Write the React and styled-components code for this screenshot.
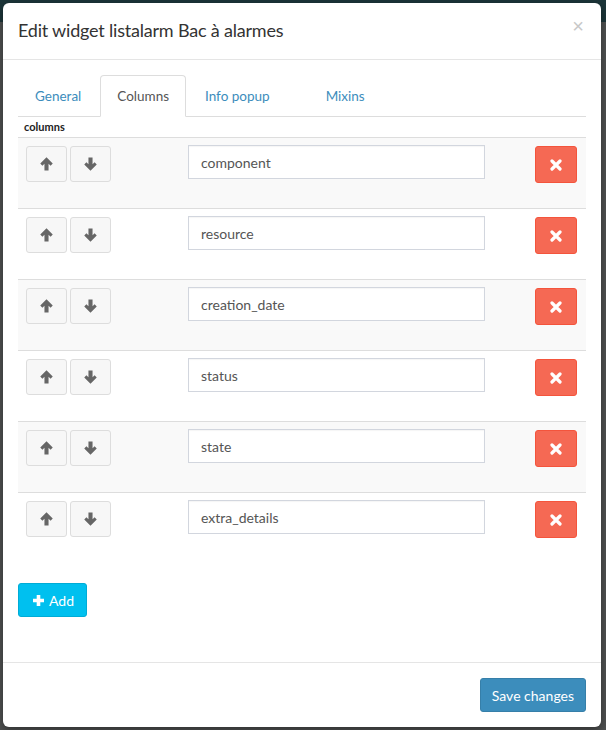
import React from "react";
import styled, { createGlobalStyle } from "styled-components";

const Global = createGlobalStyle`
  html, body { margin: 0; padding: 0; }
  body {
    background: #555a5a;
    font-family: "Lato", "Liberation Sans", sans-serif;
    width: 606px;
    height: 730px;
    overflow: hidden;
  }
  * { box-sizing: border-box; }
`;

const Backdrop = styled.div`
  width: 606px;
  height: 730px;
  background: linear-gradient(#1c3539 0, #1c3539 22px, #4f5151 22px, #4f5151 100%);
  padding: 3px 5px 3px 3px;
`;

const Modal = styled.div`
  background: #fff;
  border-radius: 6px;
  height: 724px;
  display: flex;
  flex-direction: column;
  box-shadow: 0 3px 9px rgba(0, 0, 0, 0.4);
`;

const Header = styled.div`
  display: flex;
  align-items: center;
  justify-content: space-between;
  padding: 14px 16px 16px 15px;
  height: 57px;
  border-bottom: 1px solid #e5e5e5;
`;

const Title = styled.h4`
  margin: 0;
  font-size: 18px;
  font-weight: 400;
  color: #333;
  letter-spacing: -0.2px;
`;

const Close = styled.span`
  color: #c8c8c8;
  font-size: 20px;
  font-family: "Liberation Sans", sans-serif;
  margin-top: -8px;
  margin-right: 1px;
`;

const Body = styled.div`
  flex: 1;
  padding: 15px;
`;

const Tabs = styled.ul`
  display: flex;
  list-style: none;
  margin: 0;
  padding: 0;
  border-bottom: 1px solid #ddd;
`;

const Tab = styled.li`
  margin-right: ${(p) => (p.$wide ? "22px" : "2px")};
  margin-bottom: -1px;
  padding: 10px 16px;
  line-height: 20px;
  font-size: 13.5px;
  border: 1px solid ${(p) => (p.$active ? "#ddd" : "transparent")};
  border-bottom-color: ${(p) => (p.$active ? "#fff" : "transparent")};
  border-radius: 4px 4px 0 0;
  color: ${(p) => (p.$active ? "#555" : "#3c8dbc")};
  background: ${(p) => (p.$active ? "#fff" : "transparent")};
`;

const Label = styled.div`
  font-size: 11px;
  font-weight: 700;
  color: #222;
  padding: 3px 6px 0;
  height: 20px;
  line-height: 14px;
`;

const Table = styled.div`
  display: flex;
  flex-direction: column;
`;

const Row = styled.div`
  display: grid;
  grid-template-columns: 162px 313px 1fr;
  height: 71px;
  border-top: 1px solid #ddd;
  background: ${(p) => (p.$odd ? "#f9f9f9" : "#fff")};
  padding-top: 8px;
`;

const Cell = styled.div`
  display: flex;
  align-items: flex-start;
  gap: 3px;
  padding: 0 8px;
  justify-content: ${(p) => (p.$end ? "flex-end" : "flex-start")};
  padding-right: ${(p) => (p.$end ? "9px" : "8px")};
`;

const MoveButton = styled.button`
  width: 41px;
  height: 36px;
  border: 1px solid #ddd;
  border-radius: 3px;
  background: #f7f7f7;
  color: #666;
  display: flex;
  align-items: center;
  justify-content: center;
  padding: 0;
`;

const Input = styled.input`
  width: 297px;
  height: 34px;
  margin-top: -1px;
  border: 1px solid #d2d6de;
  padding: 6px 12px;
  font-size: 14px;
  font-family: "Lato", "Liberation Sans", sans-serif;
  color: #555;
  background: #fff;
  box-shadow: inset 0 1px 1px rgba(0, 0, 0, 0.04);
  outline: none;
`;

const DangerButton = styled.button`
  width: 42px;
  height: 37px;
  border: 1px solid #f4543c;
  border-radius: 3px;
  background: #f56954;
  color: #fff;
  display: flex;
  align-items: center;
  justify-content: center;
  padding: 0;
`;

const AddButton = styled.button`
  margin-top: 20px;
  display: inline-flex;
  align-items: center;
  gap: 4px;
  height: 34px;
  padding: 0 12px 0 13px;
  background: #00c0ef;
  border: 1px solid #00acd6;
  border-radius: 3px;
  color: #fff;
  font-size: 14px;
  font-family: "Lato", "Liberation Sans", sans-serif;
`;

const Footer = styled.div`
  border-top: 1px solid #e5e5e5;
  padding: 15px 15px 15px;
  display: flex;
  justify-content: flex-end;
`;

const PrimaryButton = styled.button`
  height: 34px;
  padding: 0 11px;
  background: #3c8dbc;
  border: 1px solid #367fa9;
  border-radius: 3px;
  color: #fff;
  font-size: 14px;
  font-family: "Lato", "Liberation Sans", sans-serif;
`;

const Arrow = ({ down }) => (
  <svg width="13" height="14" viewBox="0 0 12 13" style={down ? { transform: "rotate(180deg)" } : undefined}>
    <path
      d="M6 0.3 L11.8 6.1 L9.8 8.1 L7.9 6.2 L7.9 12.6 L4.1 12.6 L4.1 6.2 L2.2 8.1 L0.2 6.1 Z"
      fill="#666"
    />
  </svg>
);

const Cross = ({ size = 12, color = "#fff" }) => (
  <svg width={size} height={size} viewBox="0 0 12 12">
    <path d="M2 2 L10 10 M10 2 L2 10" stroke={color} strokeWidth="3.2" strokeLinecap="round" />
  </svg>
);

const Plus = () => (
  <svg width="13" height="13" viewBox="0 0 13 13">
    <path d="M6.5 1 V12 M1 6.5 H12" stroke="#fff" strokeWidth="3.6" />
  </svg>
);

const columns = ["component", "resource", "creation_date", "status", "state", "extra_details"];

export default function App() {
  return (
    <>
      <Global />
      <Backdrop>
        <Modal>
          <Header>
            <Title>Edit widget listalarm Bac à alarmes</Title>
            <Close>×</Close>
          </Header>
          <Body>
            <Tabs>
              <Tab>General</Tab>
              <Tab $active>Columns</Tab>
              <Tab $wide>Info popup</Tab>
              <Tab>Mixins</Tab>
            </Tabs>
            <Label>columns</Label>
            <Table>
              {columns.map((c, i) => (
                <Row key={c} $odd={i % 2 === 0}>
                  <Cell>
                    <MoveButton><Arrow /></MoveButton>
                    <MoveButton><Arrow down /></MoveButton>
                  </Cell>
                  <Cell>
                    <Input defaultValue={c} />
                  </Cell>
                  <Cell $end>
                    <DangerButton><Cross /></DangerButton>
                  </Cell>
                </Row>
              ))}
            </Table>
            <AddButton><Plus /> Add</AddButton>
          </Body>
          <Footer>
            <PrimaryButton>Save changes</PrimaryButton>
          </Footer>
        </Modal>
      </Backdrop>
    </>
  );
}
